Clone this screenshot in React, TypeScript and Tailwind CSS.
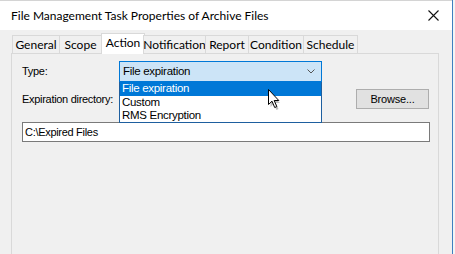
import React from "react";

const ui = { fontFamily: '"Segoe UI", Lato, "Noto Sans", sans-serif' };
const ms = { fontFamily: '"Liberation Sans", Arial, sans-serif' };

type Tab = { label: string; w: string; active?: boolean };

const tabs: Tab[] = [
  { label: "General", w: "w-[48px]" },
  { label: "Scope", w: "w-[43px]" },
  { label: "Action", w: "w-[44px]", active: true },
  { label: "Notification", w: "w-[63px]" },
  { label: "Report", w: "w-[44px]" },
  { label: "Condition", w: "w-[56px]" },
  { label: "Schedule", w: "w-[55px]" },
];

function Cursor() {
  return (
    <svg width="14" height="21" viewBox="0 0 14 21" className="absolute left-[148px] top-[7px]">
      <path d="M1.5 3.5 L1.5 17 L4.5 14 L7.5 20 L9.5 19 L6.8 13 L11 13 Z" fill="#000" opacity="0.25" transform="translate(1 1)" />
      <path d="M0.5 0.5 L0.5 15.5 L4 12.2 L6.7 18.5 L8.8 17.6 L6.2 11.5 L10.8 11.5 Z" fill="#fff" stroke="#000" strokeWidth="1" strokeLinejoin="round" />
    </svg>
  );
}

export default function App() {
  return (
    <div className="flex w-[455px] h-[254px] overflow-hidden bg-[#f0f0f0]">
      {/* dialog */}
      <div className="flex flex-col w-[452px] h-full border-t border-[#d4d4d4]">
        {/* title bar */}
        <div className="flex items-center h-[29px] bg-white pl-[11px] pr-[13px] shrink-0">
          <span className="text-[12px] text-black" style={ui}>
            File Management Task Properties of Archive Files
          </span>
          <svg width="11" height="11" viewBox="0 0 11 11" className="ml-auto">
            <path d="M0.5 0.5 L10.5 10.5 M10.5 0.5 L0.5 10.5" stroke="#111" strokeWidth="1.1" />
          </svg>
        </div>

        <div className="flex flex-col flex-1 pl-[11px] pr-[13px] pt-[3px]">
          {/* tab strip */}
          <div className="flex items-end h-[21px] pl-[1px] relative z-10 -mb-[1px]">
            {tabs.map((t) =>
              t.active ? (
                <div
                  key={t.label}
                  className={`${t.w} h-[21px] -mx-[1px] flex items-start justify-center pt-[2px] bg-white border border-b-0 border-[#d9d9d9] text-[12px] text-black leading-[14px]`}
                  style={ui}
                >
                  {t.label}
                </div>
              ) : (
                <div
                  key={t.label}
                  className={`${t.w} h-[19px] flex items-center justify-center bg-[#f0f0f0] border border-[#d9d9d9] -ml-[1px] first:ml-0 text-[12px] text-black leading-none`}
                  style={ui}
                >
                  {t.label}
                </div>
              ),
            )}
          </div>

          {/* tab page */}
          <div
            className="flex flex-col flex-1 w-[428px] border border-b-0 border-[#d9d9d9] pl-[10px] pr-[8px] text-[11px] tracking-[-0.3px] text-black"
            style={ms}
          >
            {/* type row */}
            <div className="flex items-center mt-[7px] h-[21px]">
              <span className="w-[97px]">Type:</span>
              <div className="relative w-[203px] h-[21px]">
                <div className="flex items-center h-full bg-[#cce4f7] border border-[#0078d7] pl-[3px] pr-[6px]">
                  <span className="text-[11.5px]">File expiration</span>
                  <svg width="8" height="5" viewBox="0 0 8 5" className="ml-auto">
                    <path d="M0.5 0.5 L4 4 L7.5 0.5" fill="none" stroke="#555" strokeWidth="1" />
                  </svg>
                </div>
                {/* open list */}
                <div className="absolute left-0 top-[21px] z-20 w-[203px] bg-white border border-[#1e5f9f] border-t-0 flex flex-col text-[11.5px]">
                  <div className="h-[14px] flex items-center pl-[2px] bg-[#0078d7] text-white">File expiration</div>
                  <div className="h-[13px] flex items-center pl-[2px]">Custom</div>
                  <div className="h-[13px] flex items-center pl-[2px]">RMS Encryption</div>
                  <Cursor />
                </div>
              </div>
            </div>

            {/* directory row */}
            <div className="flex items-center mt-[7px] h-[20px] pr-[1px]">
              <span>Expiration directory:</span>
              <button
                className="ml-auto w-[73px] h-[20px] bg-[#e1e1e1] border border-[#adadad] text-[11px] text-black tracking-[-0.2px]"
                style={ms}
              >
                Browse...
              </button>
            </div>

            {/* path input */}
            <div className="flex items-center mt-[13px] h-[20px] bg-white border border-[#7a7a7a] pl-[2px]">
              C:\Expired Files
            </div>
          </div>
        </div>
      </div>

      {/* neighbouring window edge */}
      <div className="w-[1px] h-full bg-[#3f7fbf]" />
      <div className="w-[2px] h-full bg-[#f4f4f4]" />
    </div>
  );
}
